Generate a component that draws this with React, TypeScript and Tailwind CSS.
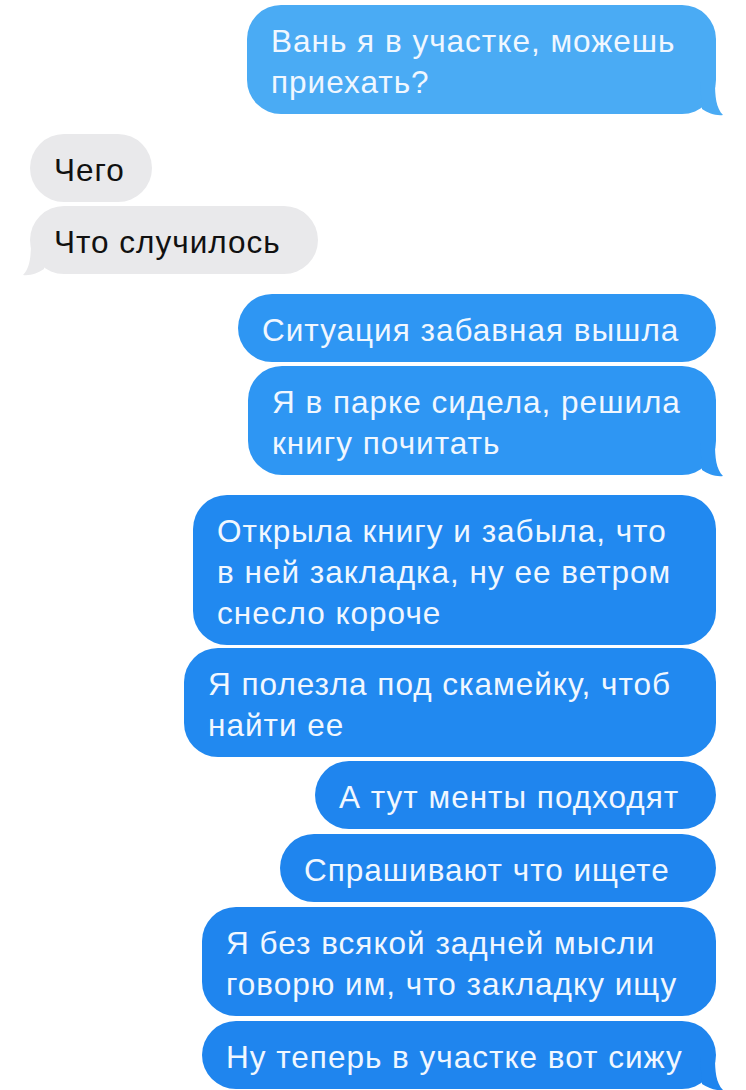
import React from "react";

type Msg = {
  text: string[];
  mine: boolean;
  box: string; // width + top margin + bg
  fill: string;
  tail?: boolean;
};

const blueLight = "#4aabf4";
const blueMid = "#2e96f3";
const blueDeep = "#1f87ef";

const messages: Msg[] = [
  { text: ["Вань я в участке, можешь", "приехать?"], mine: true, box: "w-[469px] mt-[5px] bg-[#4aabf4]", fill: blueLight, tail: true },
  { text: ["Чего"], mine: false, box: "w-[122px] mt-[20px] bg-[#e9e9eb]", fill: "#e9e9eb" },
  { text: ["Что случилось"], mine: false, box: "w-[288px] mt-[4px] bg-[#e9e9eb]", fill: "#e9e9eb", tail: true },
  { text: ["Ситуация забавная вышла"], mine: true, box: "w-[478px] mt-[20px] bg-[#2e96f3]", fill: blueMid },
  { text: ["Я в парке сидела, решила", "книгу почитать"], mine: true, box: "w-[468px] mt-[4px] bg-[#2e96f3]", fill: blueMid, tail: true },
  { text: ["Открыла книгу и забыла, что", "в ней закладка, ну ее ветром", "снесло короче"], mine: true, box: "w-[523px] mt-[20px] bg-[#2189f0]", fill: blueDeep },
  { text: ["Я полезла под скамейку, чтоб", "найти ее"], mine: true, box: "w-[532px] mt-[3px] bg-[#2189f0]", fill: blueDeep },
  { text: ["А тут менты подходят"], mine: true, box: "w-[401px] mt-[4px] bg-[#1f85ee]", fill: blueDeep },
  { text: ["Спрашивают что ищете"], mine: true, box: "w-[436px] mt-[5px] bg-[#1f85ee]", fill: blueDeep },
  { text: ["Я без всякой задней мысли", "говорю им, что закладку ищу"], mine: true, box: "w-[514px] mt-[5px] bg-[#1f85ee]", fill: blueDeep },
  { text: ["Ну теперь в участке вот сижу"], mine: true, box: "w-[514px] mt-[5px] bg-[#1f85ee]", fill: "#1f85ee", tail: true },
];

function Tail({ mine, fill }: { mine: boolean; fill: string }) {
  return (
    <svg
      width="26"
      height="34"
      viewBox="0 0 26 34"
      className={
        mine
          ? "absolute right-[-9px] bottom-[-2px]"
          : "absolute left-[-9px] bottom-[-2px] -scale-x-100"
      }
    >
      <path d="M1 0 H16 C16 14 17 26 24 33 C17 34 9 31 3 27 Z" fill={fill} />
    </svg>
  );
}

export default function App() {
  return (
    <div className="w-[746px] min-h-[1090px] bg-white font-['Liberation_Sans',Arial,sans-serif] flex flex-col pl-[30px] pr-[30px]">
      {messages.map((m, i) => (
        <div key={i} className={m.mine ? "flex justify-end" : "flex justify-start"}>
          <div
            className={
              "relative rounded-[34px] pl-[24px] pr-3 pt-[16px] pb-[11px] text-[31.5px] tracking-[1px] leading-[41px] " +
              m.box +
              (m.mine ? " text-[#f0f7ff]" : " text-[#111]")
            }
          >
            {m.text.map((line, j) => (
              <div key={j} className="whitespace-nowrap relative z-10">
                {line}
              </div>
            ))}
            {m.tail && <Tail mine={m.mine} fill={m.fill} />}
          </div>
        </div>
      ))}
    </div>
  );
}
